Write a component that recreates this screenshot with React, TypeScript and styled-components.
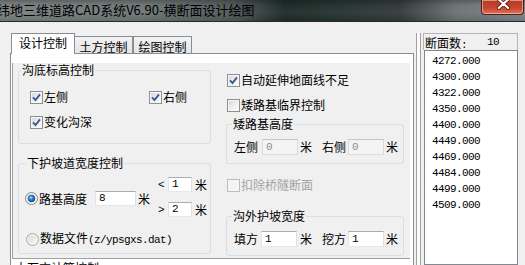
import React from 'react';
import styled, { createGlobalStyle, css } from 'styled-components';

const CJK = `"Noto Sans CJK SC", "Noto Sans", sans-serif`;
const MONO = `"Liberation Mono", "DejaVu Sans Mono", monospace`;

const GlobalStyle = createGlobalStyle`
  html, body { margin: 0; padding: 0; }
  body {
    background: #f0f0f0;
    font-family: ${CJK};
    font-size: 12px;
    line-height: 14px;
    color: #000;
    overflow: hidden;
  }
`;

const STATIONS = [
    '4272.000', '4300.000', '4322.000', '4350.000', '4400.000',
    '4449.000', '4469.000', '4484.000', '4499.000', '4509.000',
];

const Window = styled.div`
    width: 525px;
    height: 265px;
    overflow: hidden;
    display: flex;
    flex-direction: column;
    background: #f0f0f0;
`;

const TitleBar = styled.div`
    flex: none;
    height: 21px;
    display: flex;
    justify-content: space-between;
    align-items: flex-start;
    overflow: hidden;
    border-bottom: 1px solid #24292a;
    background:
        linear-gradient(180deg, rgba(0,0,0,0.22) 0, rgba(0,0,0,0) 5px, rgba(255,255,255,0.04) 12px, rgba(0,0,0,0.1) 21px),
        linear-gradient(90deg, #7b8282 0, #717878 140px, #505a5a 235px, #1f2c29 285px, #243430 330px, #343b3c 400px, #6d7274 455px, #80848a 525px);
`;

const TitleText = styled.span`
    margin-left: -3px;
    font: 13px/19px ${CJK};
    color: #000;
    white-space: nowrap;
`;

const CloseButton = styled.div`
    flex: none;
    width: 43px;
    height: 15px;
    margin-right: 1px;
    box-sizing: border-box;
    border: 1px solid #4a2019;
    border-top: none;
    border-radius: 0 0 4px 4px;
    background: linear-gradient(#b53a25, #c7452e 55%, #de735c);
    box-shadow: inset 0 0 0 1px rgba(255, 220, 210, 0.55);
    display: flex;
    justify-content: center;
`;

const Body = styled.div`
    flex: 1;
    display: flex;
    align-items: flex-start;
    padding-left: 10px;
`;

const TabControl = styled.div`
    flex: none;
    width: 404px;
    margin-top: 11px;
    display: flex;
    flex-direction: column;
`;

const TabStrip = styled.div`
    height: 21px;
    display: flex;
    align-items: flex-end;
    padding-left: 1px;
`;

const Tab = styled.div<{ $active?: boolean; $w: number; $ml?: number }>`
    box-sizing: border-box;
    width: ${p => p.$w}px;
    margin-left: ${p => p.$ml ?? 0}px;
    border: 1px solid #898c95;
    border-bottom: none;
    text-align: center;
    line-height: 14px;
    white-space: nowrap;
    ${p => p.$active
        ? css`
            height: 21px;
            padding-top: 2px;
            background: #fff;
            position: relative;
            z-index: 1;
        `
        : css`
            height: 17px;
            margin-bottom: 1px;
            padding-top: 3px;
            background: linear-gradient(#f3f3f3, #e4e4e4);
        `}
`;

const TabPage = styled.div`
    margin-top: -1px;
    height: 230px;
    box-sizing: border-box;
    border: 1px solid #898c95;
    background: #fff;
    padding: 9px 3px 0 1px;
`;

const Panel = styled.div`
    height: 196px;
    box-sizing: border-box;
    background: #f0f0f0;
    border-left: 1px solid #a0a0a0;
    border-bottom: 1px solid #a0a0a0;
    padding-left: 5px;
    display: grid;
    grid-template-columns: 193px 178px;
    column-gap: 15px;
    align-items: start;
`;

const Column = styled.div`
    display: flex;
    flex-direction: column;
`;

const GroupBox = styled.fieldset<{ $h: number; $mt?: number }>`
    margin: ${p => p.$mt ?? 0}px 0 0 0;
    padding: 0;
    min-width: 0;
    box-sizing: border-box;
    height: ${p => p.$h}px;
    border: 1px solid #d5dfe5;
    border-radius: 3px;
`;

const GroupTitle = styled.legend<{ $x: number }>`
    margin-left: ${p => p.$x}px;
    padding: 0 1px;
    line-height: 14px;
    white-space: nowrap;
`;

const CheckGrid = styled.div`
    display: grid;
    grid-template-columns: 119px auto;
    row-gap: 9px;
    padding: 12px 0 0 10px;
`;

const Option = styled.div<{ $mt?: number }>`
    display: flex;
    align-items: center;
    gap: 1px;
    height: 16px;
    margin-top: ${p => p.$mt ?? 0}px;
    padding-left: 1px;
    white-space: nowrap;
`;

const Text = styled.span<{ $ml?: number; $disabled?: boolean }>`
    margin-left: ${p => p.$ml ?? 0}px;
    color: ${p => p.$disabled ? '#a3a3a3' : '#000'};
    white-space: nowrap;
`;

const Asc = styled.span`
    font-family: ${MONO};
    font-size: 11px;
    letter-spacing: -0.6px;
`;

const Box = styled.span<{ $disabled?: boolean }>`
    flex: none;
    width: 13px;
    height: 13px;
    box-sizing: border-box;
    border: 1px solid ${p => p.$disabled ? '#bcbcbc' : '#8e8f8f'};
    background: ${p => p.$disabled
        ? '#f4f4f4'
        : 'linear-gradient(135deg, #d3d6da 0%, #eeeff0 55%, #fdfdfd 100%)'};
    box-shadow: inset 0 0 0 1px #f6f6f6;
    display: flex;
    align-items: center;
    justify-content: center;
`;

const TextBox = styled.div<{ $w: number; $h?: number; $ml?: number; $disabled?: boolean }>`
    flex: none;
    width: ${p => p.$w}px;
    height: ${p => p.$h ?? 15}px;
    margin-left: ${p => p.$ml ?? 0}px;
    box-sizing: border-box;
    border: 1px solid;
    border-color: ${p => p.$disabled ? '#c4c6ca #d8d9dc #dcdde0 #d8d9dc' : '#abadb3 #dbdfe6 #e3e9ef #e2e3ea'};
    background: ${p => p.$disabled ? '#f4f4f4' : '#fff'};
    color: ${p => p.$disabled ? '#8d8d8d' : '#000'};
    padding-left: 3px;
    font-family: ${MONO};
    font-size: 11px;
    line-height: ${p => (p.$h ?? 15) - 2}px;
`;

const InputRow = styled.div`
    display: flex;
    align-items: center;
    height: 16px;
    padding: 8px 0 0 7px;
`;

const FieldBody = styled.div`
    padding: 7px 0 0 6px;
`;

const HeightRow = styled.div`
    display: flex;
    align-items: center;
`;

const RadioLine = styled.div`
    display: flex;
    align-items: center;
    gap: 1px;
    margin-top: 3px;
`;

const Bounds = styled.div`
    display: flex;
    flex-direction: column;
    gap: 10px;
    margin-left: 8px;
`;

const BoundRow = styled.div`
    display: flex;
    align-items: center;
    height: 15px;
`;

const SidePane = styled.div`
    flex: none;
    margin: 11px 0 0 2px;
    height: 232px;
    display: flex;
    border-left: 1px solid #a0a0a0;
    padding-left: 3px;
    background: #fbfbfb;
`;

const SideInner = styled.div`
    flex: 1;
    display: flex;
    flex-direction: column;
    border-left: 1px solid #a0a0a0;
    padding-left: 2px;
    background: #f0f0f0;
`;

const CountHeader = styled.div`
    width: 95px;
    height: 17px;
    box-sizing: border-box;
    border: 1px solid #b4b4b4;
    border-bottom: none;
    padding: 1px 0 0 1px;
    line-height: 15px;
    display: flex;
    white-space: nowrap;
`;

const StationList = styled.div`
    flex: 1;
    width: 94px;
    margin-left: 1px;
    box-sizing: border-box;
    border: 1px solid #828790;
    background: #fff;
    padding: 2px 0 0 7px;
`;

const Station = styled.div`
    height: 16px;
    line-height: 16px;
    font-family: ${MONO};
    font-size: 11px;
    letter-spacing: -0.6px;
`;

const BottomNote = styled.div`
    margin-top: 2px;
    padding-left: 3px;
`;

const CheckBox = ({ checked, disabled }: { checked?: boolean; disabled?: boolean }) => (
    <Box $disabled={disabled}>
        {checked && (
            <svg width="9" height="9" viewBox="0 0 9 9">
                <path d="M1 4.4 L3.5 7 L8 1.3" fill="none" stroke="#3e5896" strokeWidth="1.9" />
            </svg>
        )}
    </Box>
);

const Radio = ({ checked }: { checked?: boolean }) => (
    <svg width="13" height="13" viewBox="0 0 13 13" style={{ flex: 'none' }}>
        <defs>
            <linearGradient id="radio-bg" x1="0" y1="0" x2="1" y2="1">
                <stop offset="0" stopColor="#d4d6d8" />
                <stop offset="1" stopColor="#fbfbfb" />
            </linearGradient>
            <radialGradient id="radio-dot" cx="0.4" cy="0.35" r="0.7">
                <stop offset="0" stopColor="#a6dcff" />
                <stop offset="0.45" stopColor="#2f86d8" />
                <stop offset="1" stopColor="#0e3f86" />
            </radialGradient>
        </defs>
        <circle cx="6.5" cy="6.5" r="6" fill="url(#radio-bg)" stroke={checked ? '#7f8590' : '#a8a8a8'} />
        <circle cx="6.5" cy="6.5" r="4.8" fill="none" stroke="#f7f7f7" strokeWidth="0.8" />
        {checked && <circle cx="6.5" cy="6.5" r="3.4" fill="url(#radio-dot)" stroke="#17487f" strokeWidth="0.6" />}
    </svg>
);

const CloseGlyph = () => (
    <svg width="43" height="14" viewBox="0 0 43 14">
        <path d="M17.5 -1 L27.5 8 M27.5 -1 L17.5 8" stroke="#5a1d14" strokeWidth="4" strokeLinecap="round" />
        <path d="M17.5 -1 L27.5 8 M27.5 -1 L17.5 8" stroke="#fff" strokeWidth="2.2" strokeLinecap="round" />
    </svg>
);

const App: React.FC = () => (
    <Window>
        <GlobalStyle />
        <TitleBar>
            <TitleText>纬地三维道路CAD系统V6.90-横断面设计绘图</TitleText>
            <CloseButton><CloseGlyph /></CloseButton>
        </TitleBar>
        <Body>
            <TabControl>
                <TabStrip>
                    <Tab $active $w={64}>设计控制</Tab>
                    <Tab $w={59} $ml={-1}>土方控制</Tab>
                    <Tab $w={59}>绘图控制</Tab>
                </TabStrip>
                <TabPage>
                    <Panel>
                        <Column>
                            <GroupBox $h={81}>
                                <GroupTitle $x={2}>沟底标高控制</GroupTitle>
                                <CheckGrid>
                                    <Option><CheckBox checked /><Text>左侧</Text></Option>
                                    <Option><CheckBox checked /><Text>右侧</Text></Option>
                                    <Option><CheckBox checked /><Text>变化沟深</Text></Option>
                                </CheckGrid>
                            </GroupBox>
                            <GroupBox $h={98} $mt={12}>
                                <GroupTitle $x={7}>下护坡道宽度控制</GroupTitle>
                                <FieldBody>
                                    <HeightRow>
                                        <RadioLine>
                                            <Radio checked />
                                            <Text>路基高度</Text>
                                            <TextBox $w={41} $ml={7}>8</TextBox>
                                            <Text $ml={1}>米</Text>
                                        </RadioLine>
                                        <Bounds>
                                            <BoundRow>
                                                <Asc>&lt;</Asc>
                                                <TextBox $w={24} $ml={4}>1</TextBox>
                                                <Text $ml={3}>米</Text>
                                            </BoundRow>
                                            <BoundRow>
                                                <Asc>&gt;</Asc>
                                                <TextBox $w={24} $ml={4}>2</TextBox>
                                                <Text $ml={3}>米</Text>
                                            </BoundRow>
                                        </Bounds>
                                    </HeightRow>
                                    <Option $mt={14}>
                                        <Radio />
                                        <Text>数据文件<Asc>(z/ypsgxs.dat)</Asc></Text>
                                    </Option>
                                </FieldBody>
                            </GroupBox>
                        </Column>
                        <Column>
                            <Option $mt={9}><CheckBox checked /><Text>自动延伸地面线不足</Text></Option>
                            <Option $mt={9}><CheckBox /><Text>矮路基临界控制</Text></Option>
                            <GroupBox $h={47} $mt={4}>
                                <GroupTitle $x={5}>矮路基高度</GroupTitle>
                                <InputRow>
                                    <Text>左侧</Text>
                                    <TextBox $w={36} $h={16} $ml={4} $disabled>0</TextBox>
                                    <Text $ml={2}>米</Text>
                                    <Text $ml={10}>右侧</Text>
                                    <TextBox $w={36} $h={16} $ml={2} $disabled>0</TextBox>
                                    <Text $ml={2}>米</Text>
                                </InputRow>
                            </GroupBox>
                            <Option $mt={13}><CheckBox disabled /><Text $disabled>扣除桥隧断面</Text></Option>
                            <GroupBox $h={47} $mt={16}>
                                <GroupTitle $x={5}>沟外护坡宽度</GroupTitle>
                                <InputRow>
                                    <Text>填方</Text>
                                    <TextBox $w={36} $h={16} $ml={3}>1</TextBox>
                                    <Text $ml={3}>米</Text>
                                    <Text $ml={10}>挖方</Text>
                                    <TextBox $w={36} $h={16} $ml={2}>1</TextBox>
                                    <Text $ml={2}>米</Text>
                                </InputRow>
                            </GroupBox>
                        </Column>
                    </Panel>
                    <BottomNote>土石方计算控制</BottomNote>
                </TabPage>
            </TabControl>
            <SidePane>
                <SideInner>
                    <CountHeader>
                        <span>断面数<Asc>:</Asc></span>
                        <Asc style={{ marginLeft: 20 }}>10</Asc>
                    </CountHeader>
                    <StationList>
                        {STATIONS.map(s => <Station key={s}>{s}</Station>)}
                    </StationList>
                </SideInner>
            </SidePane>
        </Body>
    </Window>
);

export default App;
